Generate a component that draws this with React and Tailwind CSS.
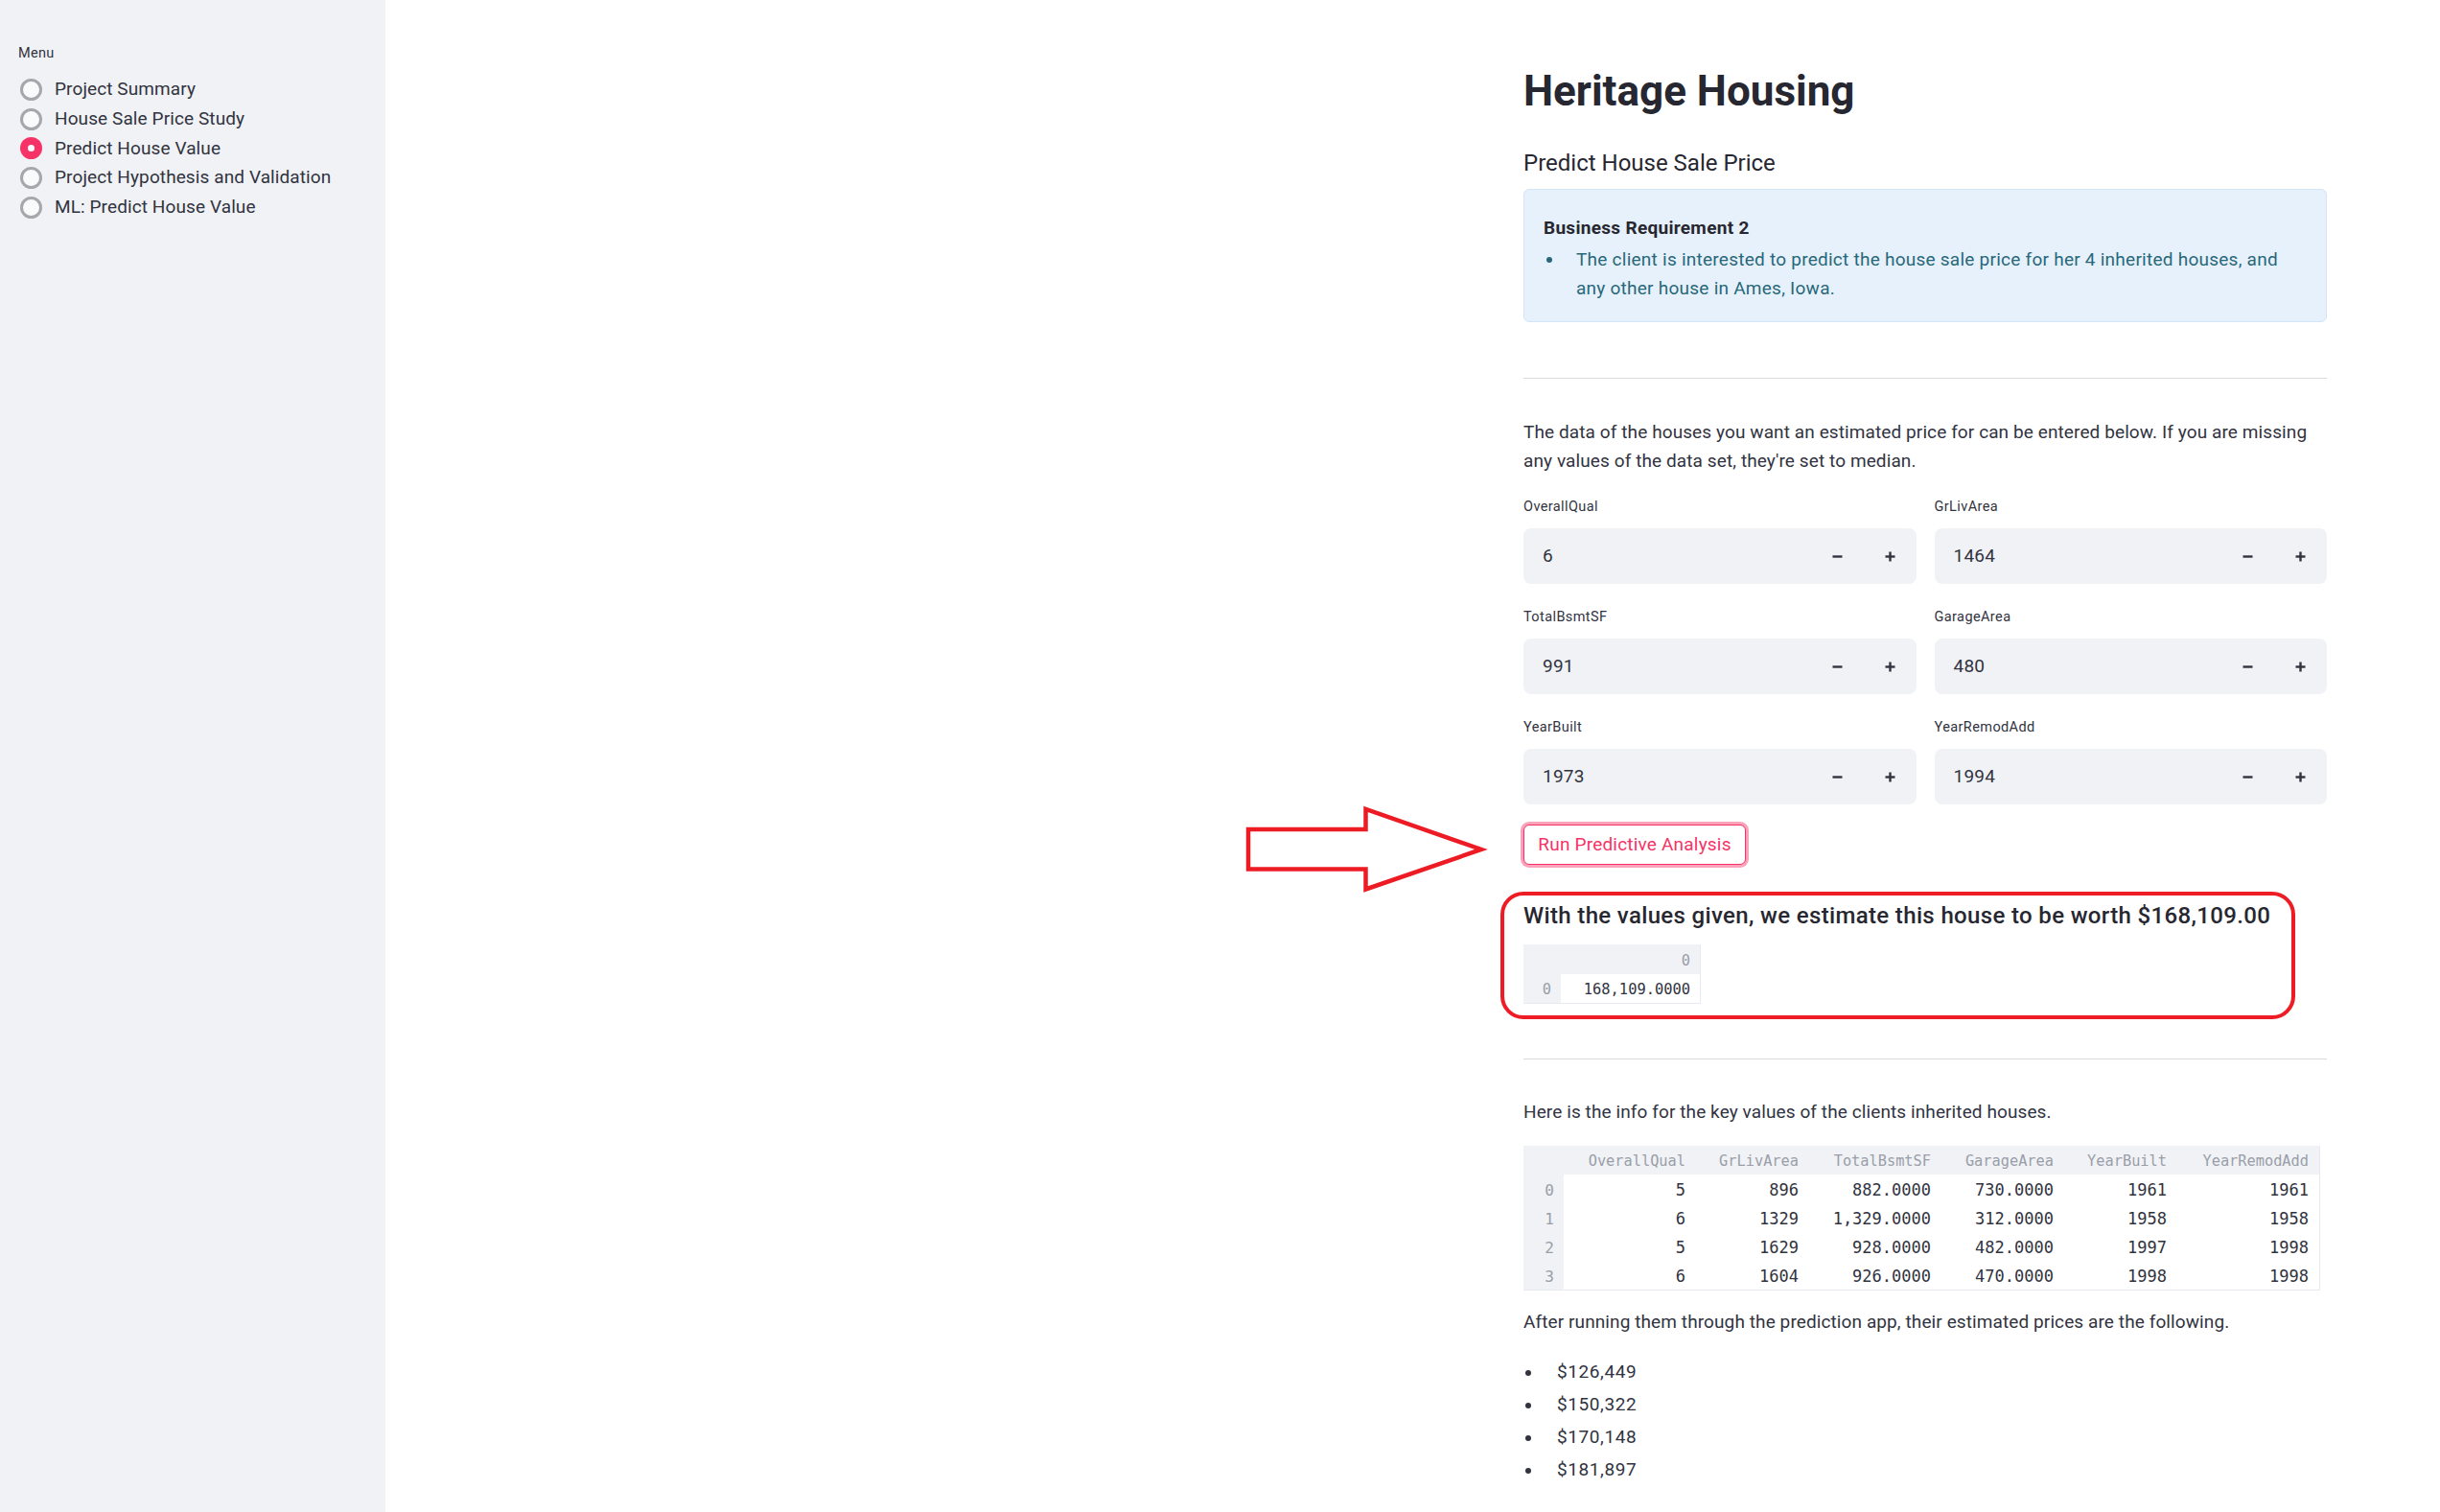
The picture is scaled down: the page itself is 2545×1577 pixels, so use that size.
import React from "react";

const MENU = [
  "Project Summary",
  "House Sale Price Study",
  "Predict House Value",
  "Project Hypothesis and Validation",
  "ML: Predict House Value",
];

const FIELDS = [
  ["OverallQual", "6"],
  ["GrLivArea", "1464"],
  ["TotalBsmtSF", "991"],
  ["GarageArea", "480"],
  ["YearBuilt", "1973"],
  ["YearRemodAdd", "1994"],
];

const COLUMNS = [
  ["OverallQual", "w-[138px]"],
  ["GrLivArea", "w-[118px]"],
  ["TotalBsmtSF", "w-[138px]"],
  ["GarageArea", "w-[128px]"],
  ["YearBuilt", "w-[118px]"],
  ["YearRemodAdd", "w-[148px]"],
];

const HOUSES = [
  ["0", "5", "896", "882.0000", "730.0000", "1961", "1961"],
  ["1", "6", "1329", "1,329.0000", "312.0000", "1958", "1958"],
  ["2", "5", "1629", "928.0000", "482.0000", "1997", "1998"],
  ["3", "6", "1604", "926.0000", "470.0000", "1998", "1998"],
];

const PRICES = ["$126,449", "$150,322", "$170,148", "$181,897"];

const Radio = ({ label, checked }) => (
  <label className="flex h-[30.8px] items-center pl-[2px]">
    {checked ? (
      <span className="flex h-[23px] w-[23px] items-center justify-center rounded-full bg-[#f63366]">
        <span className="h-[7px] w-[7px] rounded-full bg-white" />
      </span>
    ) : (
      <span className="h-[23px] w-[23px] rounded-full border-[3px] border-[#a5a7ad] bg-[#f9fafb]" />
    )}
    <span className="ml-[13px] text-[19px] leading-[30.8px] tracking-[0.1px] text-[#31333f]">{label}</span>
  </label>
);

const MinusIcon = () => (
  <svg width="11" height="11" viewBox="0 0 11 11">
    <rect x="0.5" y="4.3" width="10" height="2.4" fill="#31333f" />
  </svg>
);

const PlusIcon = () => (
  <svg width="11" height="11" viewBox="0 0 11 11">
    <rect x="0.5" y="4.3" width="10" height="2.4" fill="#31333f" />
    <rect x="4.3" y="0.5" width="2.4" height="10" fill="#31333f" />
  </svg>
);

const NumberField = ({ label, value }) => (
  <div>
    <div className="text-[14.5px] leading-[20px] tracking-[0.4px] text-[#31333f]">{label}</div>
    <div className="mt-[12px] flex h-[58px] items-center rounded-[8px] bg-[#f0f2f6]">
      <span className="flex-1 pl-[20px] text-[19px] tracking-[0.2px] text-[#31333f]">{value}</span>
      <button type="button" className="flex h-full w-[55px] items-center justify-center">
        <MinusIcon />
      </button>
      <button type="button" className="flex h-full w-[55px] items-center justify-center">
        <PlusIcon />
      </button>
    </div>
  </div>
);

// red annotation arrow pointing at the button
const Arrow = () => (
  <svg
    className="pointer-events-none absolute left-[-291px] top-[-20px]"
    width="254"
    height="92"
    viewBox="0 0 254 92"
  >
    <polygon
      points="4,25 126.5,25 126.5,4 247,46 126.5,87.5 126.5,66.5 4,66.5"
      fill="none"
      stroke="#ed1c24"
      strokeWidth="4.5"
      strokeLinejoin="miter"
    />
  </svg>
);

export default function App() {
  return (
    <div className="flex min-h-screen font-['Roboto',sans-serif]">
      {/* Sidebar */}
      <aside className="w-[402px] shrink-0 bg-[#f0f2f6] pl-[19px] pt-[46px]">
        <div className="text-[14.5px] leading-[20px] tracking-[0.3px] text-[#31333f]">Menu</div>
        <div className="mt-[12px] flex flex-col">
          {MENU.map((item) => (
            <Radio key={item} label={item} checked={item === "Predict House Value"} />
          ))}
        </div>
      </aside>

      {/* Main */}
      <main className="flex-1 bg-white">
        <div className="ml-[1187px] w-[838px] pt-[69px] text-[#31333f]">
          <h1 className="text-[44px] font-bold leading-[52px] text-[#262730]">Heritage Housing</h1>
          <h3 className="mt-[33px] text-[24px] leading-[32px] text-[#262730]">Predict House Sale Price</h3>

          <div className="mt-[11px] rounded-[6px] border border-[#d3e5f7] bg-[#e7f1fb] pb-[19px] pl-[20px] pr-[20px] pt-[25px]">
            <div className="text-[19px] font-bold leading-[29px] tracking-[0.3px] text-[#262730]">
              Business Requirement 2
            </div>
            <div className="mt-[4px] flex text-[19px] leading-[30px] tracking-[0.25px] text-[#28687a]">
              <span className="flex w-[34px] shrink-0 pl-[3px] pt-[12px]">
                <span className="h-[6px] w-[6px] rounded-full bg-[#28687a]" />
              </span>
              <span>
                The client is interested to predict the house sale price for her 4 inherited houses, and
                any other house in Ames, Iowa.
              </span>
            </div>
          </div>

          <div className="mt-[58px] h-px bg-[#d9dadd]" />

          <p className="mt-[41px] text-[19px] leading-[29.5px] tracking-[0.1px]">
            The data of the houses you want an estimated price for can be entered below. If you are missing
            any values of the data set, they're set to median.
          </p>

          <div className="mt-[24px] grid grid-cols-2 gap-x-[19px] gap-y-[25px]">
            {FIELDS.map(([label, value]) => (
              <NumberField key={label} label={label} value={value} />
            ))}
          </div>

          <div className="relative mt-[21px]">
            <Arrow />
            <button
              type="button"
              className="h-[42px] w-[232px] rounded-[6px] border border-[#f63366] bg-white text-[19px] tracking-[0.2px] text-[#f63366] shadow-[0_0_0_3px_rgba(246,51,102,0.45)]"
            >
              Run Predictive Analysis
            </button>
          </div>

          <div className="relative mt-[37px]">
            <div className="pointer-events-none absolute left-[-24px] top-[-9px] h-[133px] w-[829px] rounded-[24px] border-[4px] border-[#ee1c25]" />
            <h3 className="text-[24px] font-medium leading-[32px] tracking-[0.35px] text-[#262730]">
              With the values given, we estimate this house to be worth $168,109.00
            </h3>
            <div className="mt-[14px] grid w-fit grid-cols-[39px_145px] border-b border-r border-[#e6e9ef] font-['DejaVu_Sans_Mono',monospace]">
              <div className="h-[31px] bg-[#f0f2f6]" />
              <div className="flex h-[31px] items-center justify-end bg-[#f0f2f6] pr-[10px] pt-[3px] text-[15.3px] text-[#9a9ea8]">
                0
              </div>
              <div className="flex h-[30px] items-center justify-end bg-[#f0f2f6] pr-[10px] pt-[3px] text-[15.3px] text-[#9a9ea8]">
                0
              </div>
              <div className="flex h-[30px] items-center justify-end bg-white pr-[10px] pt-[3px] text-[15.4px] text-[#31333f]">
                168,109.0000
              </div>
            </div>
          </div>

          <div className="mt-[57px] h-px bg-[#d9dadd]" />

          <p className="mt-[40px] text-[19px] leading-[29.5px] tracking-[0.1px]">
            Here is the info for the key values of the clients inherited houses.
          </p>

          <div className="mt-[20px] flex w-fit flex-col border-b border-r border-[#e6e9ef] font-['DejaVu_Sans_Mono',monospace]">
            <div className="flex h-[30.5px] bg-[#f0f2f6] pt-[3px] text-[15.3px] text-[#9a9ea8]">
              <div className="w-[42px]" />
              {COLUMNS.map(([name, w]) => (
                <div key={name} className={`${w} flex items-center justify-end pr-[11px]`}>
                  {name}
                </div>
              ))}
            </div>
            {HOUSES.map((row) => (
              <div key={row[0]} className="flex h-[30px]">
                <div className="flex w-[42px] items-center justify-end bg-[#f0f2f6] pr-[10px] pt-[3px] text-[16px] text-[#9a9ea8]">
                  {row[0]}
                </div>
                {row.slice(1).map((cell, i) => (
                  <div
                    key={i}
                    className={`${COLUMNS[i][1]} flex items-center justify-end bg-white pr-[11px] pt-[3px] text-[17px] text-[#31333f]`}
                  >
                    {cell}
                  </div>
                ))}
              </div>
            ))}
          </div>

          <p className="mt-[18px] text-[19px] leading-[29.5px] tracking-[0.1px]">
            After running them through the prediction app, their estimated prices are the following.
          </p>

          <ul className="mt-[20px] pb-[24px]">
            {PRICES.map((p) => (
              <li key={p} className="flex text-[19px] leading-[34.3px] tracking-[0.6px]">
                <span className="flex w-[35px] shrink-0 pl-[2px] pt-[15px]">
                  <span className="h-[6px] w-[6px] rounded-full bg-[#31333f]" />
                </span>
                {p}
              </li>
            ))}
          </ul>
        </div>
      </main>
    </div>
  );
}
